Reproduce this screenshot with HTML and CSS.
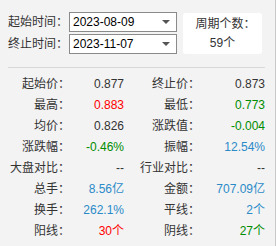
FILE: index.html
```html
<!DOCTYPE html>
<html lang="zh">
<head>
<meta charset="utf-8">
<link rel="stylesheet" href="styles.css">
</head>
<body>
<div class="panel">
  <div class="top">
    <div class="dates">
      <div class="date-row">
        <span class="date-label">起始时间：</span>
        <div class="select"><span>2023-08-09</span><span class="arrow"></span></div>
      </div>
      <div class="date-row">
        <span class="date-label">终止时间：</span>
        <div class="select"><span>2023-11-07</span><span class="arrow"></span></div>
      </div>
    </div>
    <div class="count">
      <div>周期个数：</div>
      <div>59个</div>
    </div>
  </div>
  <div class="sep"></div>
  <div class="stats">
    <span class="lbl">起始价：</span><span class="val">0.877</span>
    <span class="lbl">终止价：</span><span class="val">0.873</span>

    <span class="lbl">最高：</span><span class="val red">0.883</span>
    <span class="lbl">最低：</span><span class="val green">0.773</span>

    <span class="lbl">均价：</span><span class="val">0.826</span>
    <span class="lbl">涨跌值：</span><span class="val green">-0.004</span>

    <span class="lbl">涨跌幅：</span><span class="val green">-0.46%</span>
    <span class="lbl">振幅：</span><span class="val blue">12.54%</span>

    <span class="lbl">大盘对比：</span><span class="val">--</span>
    <span class="lbl">行业对比：</span><span class="val">--</span>

    <span class="lbl">总手：</span><span class="val blue">8.56亿</span>
    <span class="lbl">金额：</span><span class="val blue">707.09亿</span>

    <span class="lbl">换手：</span><span class="val blue">262.1%</span>
    <span class="lbl">平线：</span><span class="val blue">2个</span>

    <span class="lbl">阳线：</span><span class="val red">30个</span>
    <span class="lbl">阴线：</span><span class="val green">27个</span>
  </div>
</div>
</body>
</html>
```

FILE: styles.css
```css
html, body {
  margin: 0;
  padding: 0;
}
body {
  font-family: "Liberation Sans", "Noto Sans CJK SC", sans-serif;
  font-size: 12px;
  color: #333;
  background: #f3f3f3;
}
.panel {
  width: 276px;
  height: 246px;
  box-sizing: border-box;
  border-right: 1px solid #c8c8c8;
  background: #f3f3f3;
  overflow: hidden;
}
.top {
  display: flex;
  padding: 12px 0 0 8px;
  align-items: flex-start;
}
.dates {
  display: flex;
  flex-direction: column;
  gap: 2px;
}
.date-row {
  display: flex;
  align-items: center;
  height: 20px;
}
.date-label {
  width: 61px;
  line-height: 20px;
  white-space: nowrap;
}
.select {
  box-sizing: border-box;
  width: 108px;
  height: 20px;
  border: 1px solid #8a8a8a;
  background: #fff;
  display: flex;
  align-items: center;
  justify-content: space-between;
  padding: 0 6px 0 3px;
  color: #000;
  font-size: 12px;
}
.arrow {
  width: 0;
  height: 0;
  border-left: 4.5px solid transparent;
  border-right: 4.5px solid transparent;
  border-top: 4px solid #555;
}
.count {
  margin-left: 6px;
  margin-top: 1px;
  width: 79px;
  height: 41px;
  background: #fff;
  border-radius: 3px;
  display: flex;
  flex-direction: column;
  align-items: center;
  justify-content: center;
  line-height: 19px;
  color: #333;
}
.count div:first-child {
  padding-left: 6px;
}
.sep {
  margin: 13px 0 0 8px;
  width: 257px;
  height: 1px;
  background: #d8d8d8;
}
.stats {
  display: grid;
  grid-template-columns: 62px 54px 76px 65px;
  grid-auto-rows: 21px;
  margin: 6px 0 0 8px;
  line-height: 21px;
}
.lbl {
  text-align: right;
  white-space: nowrap;
  color: #333;
}
.val {
  text-align: right;
  white-space: nowrap;
  color: #333;
}
.red { color: #ff0000; }
.green { color: #008c00; }
.blue { color: #2a8ac8; }
```
